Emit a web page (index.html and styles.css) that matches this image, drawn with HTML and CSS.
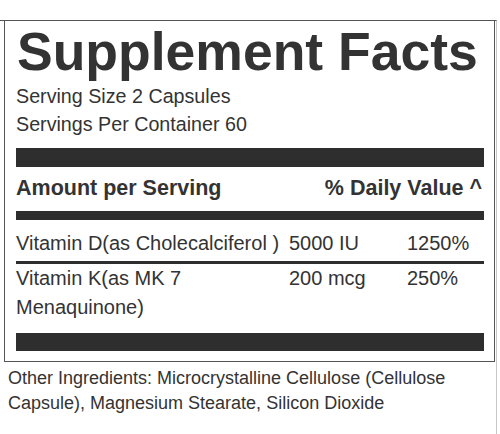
FILE: index.html
```html
<!DOCTYPE html>
<html lang="en">
<head>
<meta charset="utf-8">
<title>Supplement Facts</title>
<link rel="stylesheet" href="styles.css">
</head>
<body>
<div class="sheet">
  <section class="label">
    <h1 class="title">Supplement Facts</h1>
    <p class="serving">Serving Size 2 Capsules</p>
    <p class="serving">Servings Per Container 60</p>
    <div class="bar bar-thick"></div>
    <div class="head-row">
      <span>Amount per Serving</span>
      <span>% Daily Value ^</span>
    </div>
    <div class="bar bar-thin"></div>
    <div class="nutrients">
      <div class="row row-sep">
        <span>Vitamin D(as Cholecalciferol )</span>
        <span>5000 IU</span>
        <span>1250%</span>
      </div>
      <div class="row">
        <span>Vitamin K(as MK 7 Menaquinone)</span>
        <span>200 mcg</span>
        <span>250%</span>
      </div>
    </div>
    <div class="bar bar-bottom"></div>
  </section>
  <p class="other">Other Ingredients: Microcrystalline Cellulose (Cellulose Capsule), Magnesium Stearate, Silicon Dioxide</p>
</div>
</body>
</html>
```
FILE: styles.css
```css
* { box-sizing: border-box; }
html, body { margin: 0; padding: 0; background: #fff; }
body {
  font-family: "Liberation Sans", Arial, sans-serif;
  color: #333;
  width: 500px;
  height: 434px;
  overflow: hidden;
  padding-top: 20px;
}
.sheet {
  width: 497px;
  border-top: 1px solid #555;
  border-right: 1px solid #c8c8c8;
  padding-bottom: 20px;
}
.label {
  margin-left: 4px;
  width: 491px;
  border: 1px solid #555;
  border-top: none;
  padding: 0 10px 10px 11px;
}
.title {
  margin: 0;
  padding-left: 1px;
  font-size: 53.5px;
  line-height: 62px;
  font-weight: bold;
  color: #333;
}
.serving {
  margin: 0;
  font-size: 19.7px;
  line-height: 27.5px;
}
.bar { background: #2e2e2e; }
.bar-thick { height: 19px; margin-top: 10px; }
.bar-thin { height: 9px; margin-top: 9px; }
.bar-bottom { height: 18px; margin-top: 11px; }
.head-row {
  display: flex;
  justify-content: space-between;
  font-weight: bold;
  font-size: 21.5px;
  line-height: 28px;
  margin-top: 7px;
  padding-right: 2px;
}
.nutrients { margin-top: 9px; }
.row {
  display: grid;
  grid-template-columns: 273px 118px 1fr;
  font-size: 20px;
  line-height: 29px;
}
.row-sep {
  padding-bottom: 3px;
  border-bottom: 3px solid #2e2e2e;
}
.other {
  margin: 4px 0 0 0;
  padding-left: 8px;
  font-size: 18px;
  line-height: 25px;
}
```
